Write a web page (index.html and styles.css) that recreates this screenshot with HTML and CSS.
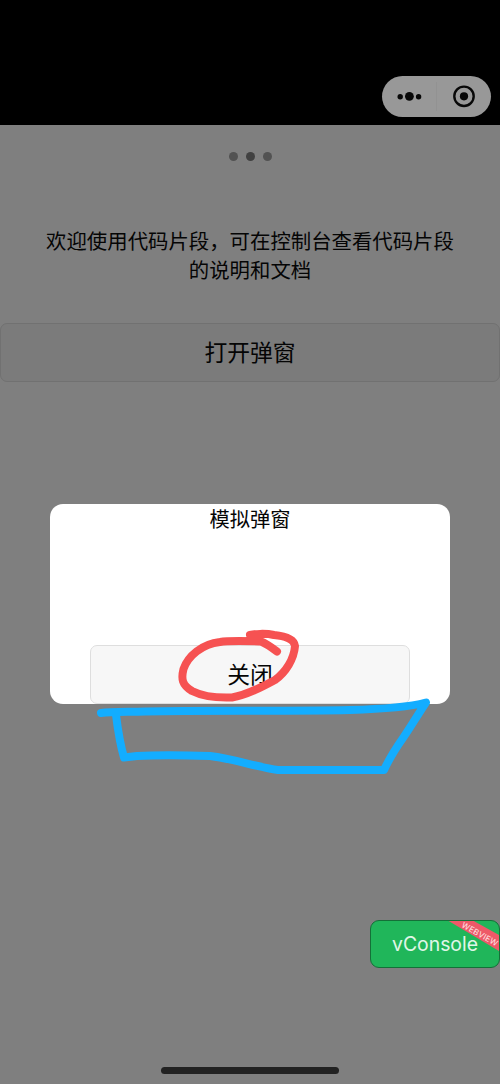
FILE: index.html
```html
<!DOCTYPE html>
<html lang="zh-CN">
<head>
<meta charset="utf-8">
<title>代码片段</title>
<link rel="stylesheet" href="styles.css">
</head>
<body>
<div class="screen">
  <header class="navbar">
    <div class="capsule">
      <svg class="capsule-icons" width="109" height="41" viewBox="0 0 109 41">
        <circle cx="18.2" cy="20.7" r="2.7"/>
        <circle cx="27.4" cy="20.3" r="4.4"/>
        <circle cx="36.6" cy="20.7" r="2.7"/>
        <path class="divider" d="M54.500 6V35"/>
        <circle class="ring" cx="82" cy="20.3" r="9.7"/>
        <circle cx="82" cy="20.3" r="4.1"/>
      </svg>
    </div>
  </header>
  <main class="page">
    <div class="loading"><i class="dot"></i><i class="dot dot-active"></i><i class="dot"></i></div>
    <p class="intro">欢迎使用代码片段，可在控制台查看代码片段<br>的说明和文档</p>
    <div class="button open-button">打开弹窗</div>
    <section class="dialog">
      <h1 class="dialog-title">模拟弹窗</h1>
      <div class="button close-button">关闭</div>
    </section>
  </main>
  <svg class="marks" width="500" height="1084" viewBox="0 0 500 1084">
    <path class="mark-red" d="M277 651.5C271 647 266 643.5 261 641.5C244 641 229 640.5 220 642C202 644 188 656 183.500 669C181 679 182 685 192 691C205 697.500 219 698 232 697.500C247 695 262 687 275 680C286 672 294 659 295 646C294 639 285 636 274 635C265 633 254 634 250 635"/>
    <path class="mark-blue" d="M101 713C111 711.500 125 712 145 711.500C205 710 280 711.500 350 710C385 709 407 707.500 426 702.500C417 716 410 728 403 738C396 748 390 757 384 770H278C256 767 235 759 210 756C180 755 155 755 137 756L124 757.500C120 744 118 731 116 715"/>
  </svg>
  <div class="vconsole">
    <span class="vconsole-label">vConsole</span>
    <svg class="ribbon" width="128" height="46" viewBox="0 0 128 46">
      <path class="ribbon-band" d="M76 -1H101L128 14V30Z"/>
      <text class="ribbon-text" x="90" y="5.800" transform="rotate(29 90 5.800)" textLength="40">WEBVIEW</text>
    </svg>
  </div>
  <div class="home-indicator"></div>
</div>
</body>
</html>
```
FILE: styles.css
```css
* { box-sizing: border-box; }
body {
  margin: 0;
  font-family: "Liberation Sans", "Noto Sans CJK SC", sans-serif;
  color: #050505;
}
.screen {
  position: relative;
  width: 500px;
  height: 1084px;
  overflow: hidden;
  background: #7f7f7f;
}
.navbar {
  display: flex;
  justify-content: flex-end;
  height: 125px;
  padding: 76px 9px 0 0;
  background: #000;
}
.capsule {
  width: 109px;
  height: 41px;
  border-radius: 21px;
  background: #989898;
}
.capsule-icons { display: block; fill: #080808; }
.divider { stroke: #929292; stroke-width: 1; }
.ring { fill: none; stroke: #080808; stroke-width: 2.4; }
.page { display: flex; flex-direction: column; }
.loading {
  display: flex;
  justify-content: center;
  gap: 8px;
  padding-top: 27px;
}
.dot {
  width: 9px;
  height: 9px;
  border-radius: 50%;
  background: #525252;
}
.dot-active { background: #414141; }
.intro {
  margin: 65px 0 0;
  text-align: center;
  white-space: nowrap;
  font-family: "Noto Sans CJK SC", sans-serif;
  font-size: 20.4px;
  line-height: 29px;
}
.button {
  display: flex;
  justify-content: center;
  border: 1px solid #717171;
  border-radius: 7px;
  height: 59px;
  font-family: "Noto Sans CJK SC", sans-serif;
  font-size: 22.8px;
  line-height: 55px;
}
.open-button {
  margin-top: 39px;
  background: #7b7b7b;
}
.dialog {
  width: 400px;
  height: 200px;
  margin: 122px auto 0;
  overflow: hidden;
  border-radius: 13px;
  background: #fff;
}
.dialog-title {
  margin: 0;
  text-align: center;
  font-family: "Noto Sans CJK SC", sans-serif;
  font-size: 20.3px;
  font-weight: 400;
  line-height: 29px;
}
.close-button {
  width: 320px;
  margin: 112px auto 0;
  border-color: #dedede;
  background: #f7f7f7;
}
.marks {
  position: absolute;
  top: 0;
  left: 0;
  fill: none;
  stroke-width: 8;
  stroke-linecap: round;
  stroke-linejoin: round;
}
.mark-red { stroke: #f65252; }
.mark-blue { stroke: #13adff; }
.vconsole {
  position: absolute;
  top: 920px;
  right: 0;
  width: 130px;
  height: 48px;
  overflow: hidden;
  border: 1px solid #147038;
  border-radius: 9px;
  background: #20b65a;
  text-align: center;
}
.vconsole-label {
  font-family: Inter, sans-serif;
  font-size: 19.4px;
  line-height: 47px;
  color: #e0f6e8;
}
.ribbon {
  position: absolute;
  top: 0;
  left: 0;
}
.ribbon-band { fill: #ee5968; }
.ribbon-text {
  font-family: Inter, sans-serif;
  font-size: 8px;
  fill: #ffe6e8;
}
.home-indicator {
  position: absolute;
  top: 1067px;
  left: 161px;
  width: 178px;
  height: 7px;
  border-radius: 4px;
  background: #222;
}
```
